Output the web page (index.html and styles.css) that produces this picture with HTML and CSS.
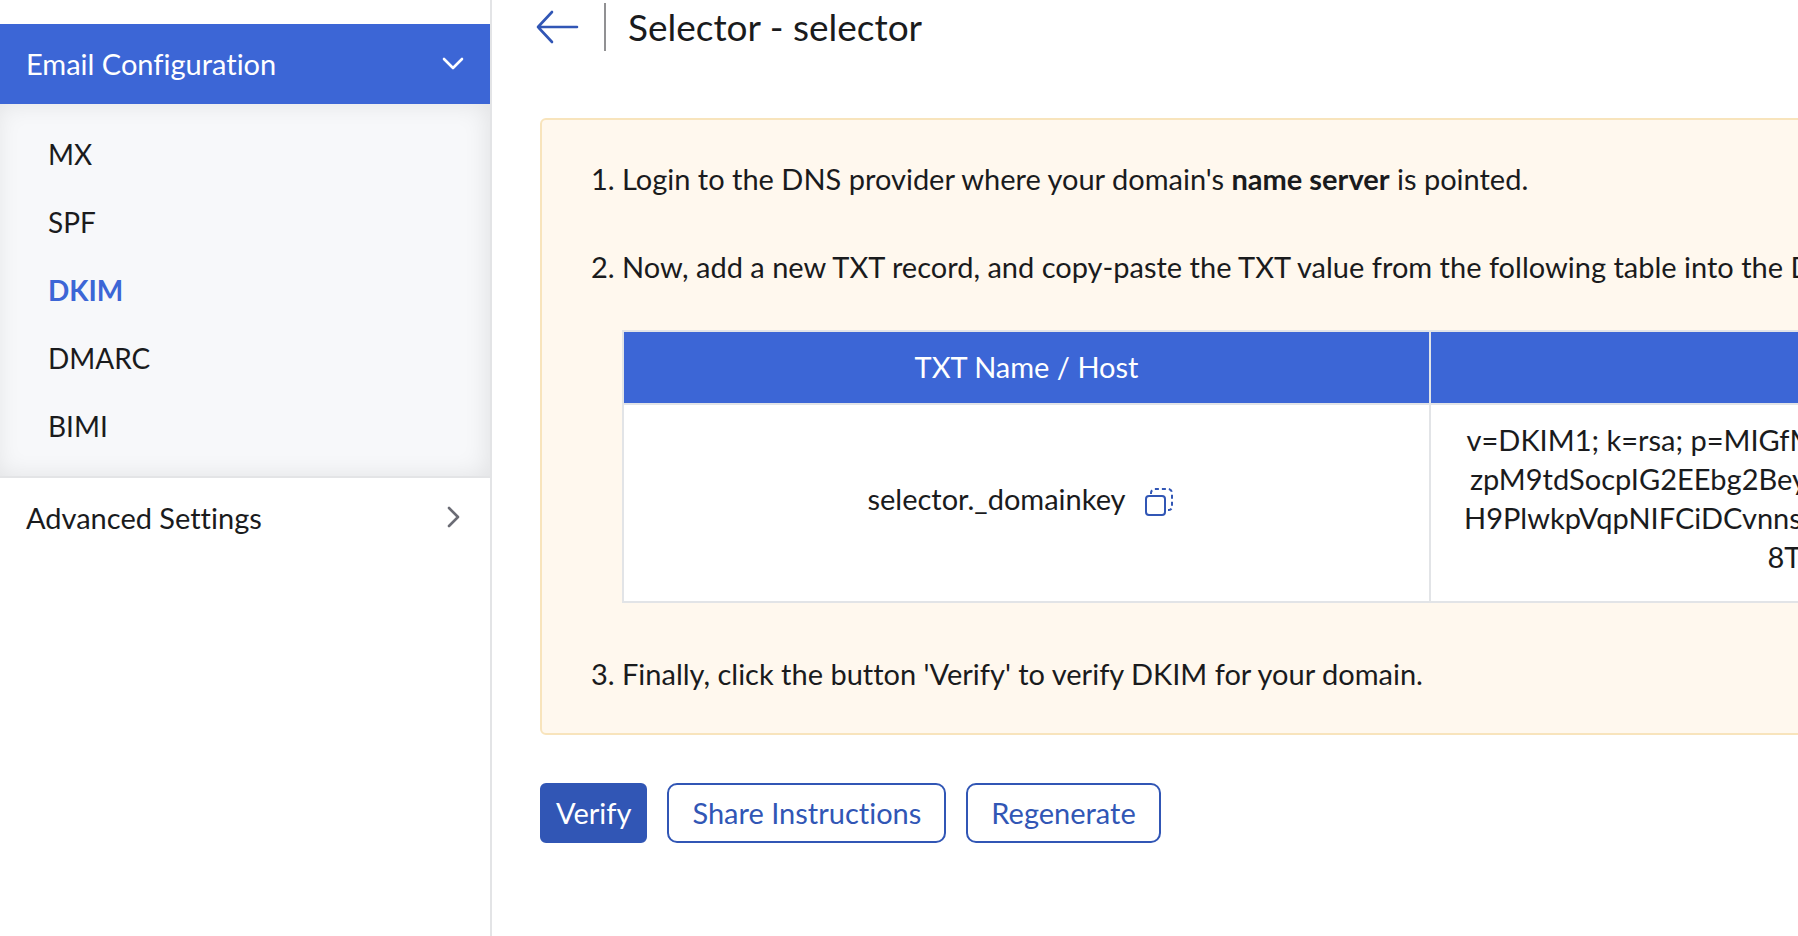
FILE: index.html
```html
<!DOCTYPE html>
<html lang="en">
<head>
    <meta charset="UTF-8">
    <meta name="viewport" content="width=device-width, initial-scale=1.0">
    <title>DKIM Selector</title>
    <link rel="stylesheet" href="styles.css">
</head>

<body>
    <div class="layout">
        <nav class="sidebar">
            <button type="button" class="menu-title active" aria-expanded="true">
                Email Configuration
                <svg class="chevron" viewBox="0 0 26 26"><path d="M4 9l9 9 9-9"/></svg>
            </button>
            <ul class="submenu">
                <li><a href="#">MX</a></li>
                <li><a href="#">SPF</a></li>
                <li><a href="#" class="selected">DKIM</a></li>
                <li><a href="#">DMARC</a></li>
                <li><a href="#">BIMI</a></li>
            </ul>
            <button type="button" class="menu-title" aria-expanded="false">
                Advanced Settings
                <svg class="chevron" viewBox="0 0 26 26"><path d="M9 4l9 9-9 9"/></svg>
            </button>
        </nav>

        <main class="content">
            <header class="page-header">
                <a href="#" class="back" aria-label="Back">
                    <svg viewBox="0 0 44 36"><path d="M16 3L2 18l14 15M2 18h39"/></svg>
                </a>
                <h1>Selector - selector</h1>
            </header>

            <section class="instructions">
                <ol>
                    <li>Login to the DNS provider where your domain's <b>name server</b> is pointed.</li>
                    <li>
                        Now, add a new TXT record, and copy-paste the TXT value from the following table into the DNS Manager.
                        <table>
                            <thead>
                                <tr>
                                    <th>TXT Name / Host</th>
                                    <th>TXT Value</th>
                                </tr>
                            </thead>
                            <tbody>
                                <tr>
                                    <td>
                                        <div class="host">
                                            selector._domainkey
                                            <button type="button" class="copy" aria-label="Copy">
                                                <svg viewBox="0 0 30 30">
                                                    <rect x="2" y="9" width="19" height="19" rx="3"/>
                                                    <path class="dashed" d="M7 7V6a4 4 0 0 1 4-4h13a4 4 0 0 1 4 4v14a3 3 0 0 1-3 3h-1"/>
                                                </svg>
                                            </button>
                                        </div>
                                    </td>
                                    <td>
                                        v=DKIM1; k=rsa; p=MIGfMA0GCSqGSIb3DQEBAQUAA4GNAi<br>
                                        zpM9tdSocpIG2EEbg2BeyRk4xLq7TnWc5uHjZs3aYdPo4729wi<br>
                                        H9PlwkpVqpNIFCiDCvnnsKe2mXb6QrTf8gJvUh4yLzWo1r52Gf<br>
                                        8T5rtwIDAQAB
                                    </td>
                                </tr>
                            </tbody>
                        </table>
                    </li>
                    <li>Finally, click the button 'Verify' to verify DKIM for your domain.</li>
                </ol>
            </section>

            <div class="actions">
                <button type="button" class="btn primary">Verify</button>
                <button type="button" class="btn">Share Instructions</button>
                <button type="button" class="btn">Regenerate</button>
            </div>
        </main>
    </div>
</body>
</html>
```

FILE: styles.css
```css
* {
    box-sizing: border-box;
}
body {
    margin: 0;
    background: white;
    color: #1a1b1d;
    font-family: Lato, sans-serif;
    font-size: 29px;
    font-variant-ligatures: none;
    line-height: 39px;
    overflow: hidden;
}
button {
    font: inherit;
    font-variant-ligatures: none;
    cursor: pointer;
}
a {
    color: inherit;
    text-decoration: none;
}
svg {
    display: block;
    fill: none;
    stroke: currentColor;
    stroke-width: 2.6;
    stroke-linecap: round;
    stroke-linejoin: round;
}
.layout {
    display: flex;
    min-height: 100vh;
}

/* Sidebar */
.sidebar {
    flex: 0 0 492px;
    padding-top: 24px;
    border-right: 2px solid #e3e4e6;
}
.menu-title {
    display: flex;
    align-items: center;
    justify-content: space-between;
    width: 100%;
    height: 80px;
    padding: 0 24px 2px 26px;
    border: none;
    background: white;
    color: #1a1b1d;
}
.menu-title.active {
    background: #3c66d6;
    color: white;
}
.chevron {
    width: 26px;
    height: 26px;
    color: #6b6c75;
}
.active .chevron {
    color: white;
}
.submenu {
    margin: 0;
    padding: 16px 0;
    list-style: none;
    background: #f7f8fa;
    border-bottom: 2px solid #e3e4e6;
    box-shadow: inset -3px 0 24px rgba(0, 0, 0, 0.09);
}
.submenu a {
    display: block;
    padding: 0 48px;
    font-size: 28px;
    line-height: 68px;
}
.submenu .selected {
    color: #3c66d6;
    font-weight: bold;
}

/* Content */
.content {
    flex: 1;
    min-width: 0;
    padding: 3px 0 0 48px;
}
.page-header {
    display: flex;
    align-items: center;
    margin-bottom: 67px;
}
.back {
    margin-left: -4px;
    padding-right: 24px;
    color: #3156b5;
}
.back svg {
    width: 44px;
    height: 36px;
}
h1 {
    margin: 0;
    padding-left: 22px;
    border-left: 2px solid #919193;
    font-size: 37px;
    font-weight: normal;
    line-height: 48px;
}
.instructions {
    min-width: 1820px;
    margin-bottom: 48px;
    padding: 39px 48px 40px;
    background: #fff8ee;
    border: 2px solid #f8e4bc;
    border-radius: 6px;
}
ol {
    margin: 0;
    padding-left: 32px;
}
ol li {
    white-space: nowrap;
}
ol li + li {
    margin-top: 49px;
}
table {
    width: 100%;
    margin: 44px 0 51px;
    table-layout: fixed;
    border-collapse: collapse;
    background: white;
    text-align: center;
}
th, td {
    border: 2px solid #e2e4e7;
}
th:first-child {
    width: 807px;
}
th {
    padding: 15px 16px 17px;
    background: #3c66d6;
    color: white;
    font-weight: normal;
}
td {
    padding: 15px 30px 25px;
}
.host {
    display: flex;
    align-items: center;
    justify-content: center;
    gap: 18px;
}
.copy {
    margin-right: 12px;
    padding: 8px 0 0;
    border: none;
    background: none;
    color: #3156b5;
}
.copy svg {
    width: 30px;
    height: 30px;
    stroke-width: 2;
}
.dashed {
    stroke-dasharray: 4 3;
    stroke-linecap: butt;
}
.actions {
    display: flex;
    gap: 20px;
}
.btn {
    height: 60px;
    padding: 0 23px 2px;
    border: 2px solid #3156b5;
    border-radius: 10px;
    background: white;
    color: #3156b5;
}
.btn.primary {
    padding: 0 14px 2px;
    border-radius: 6px;
    background: #3156b5;
    color: white;
}
```
